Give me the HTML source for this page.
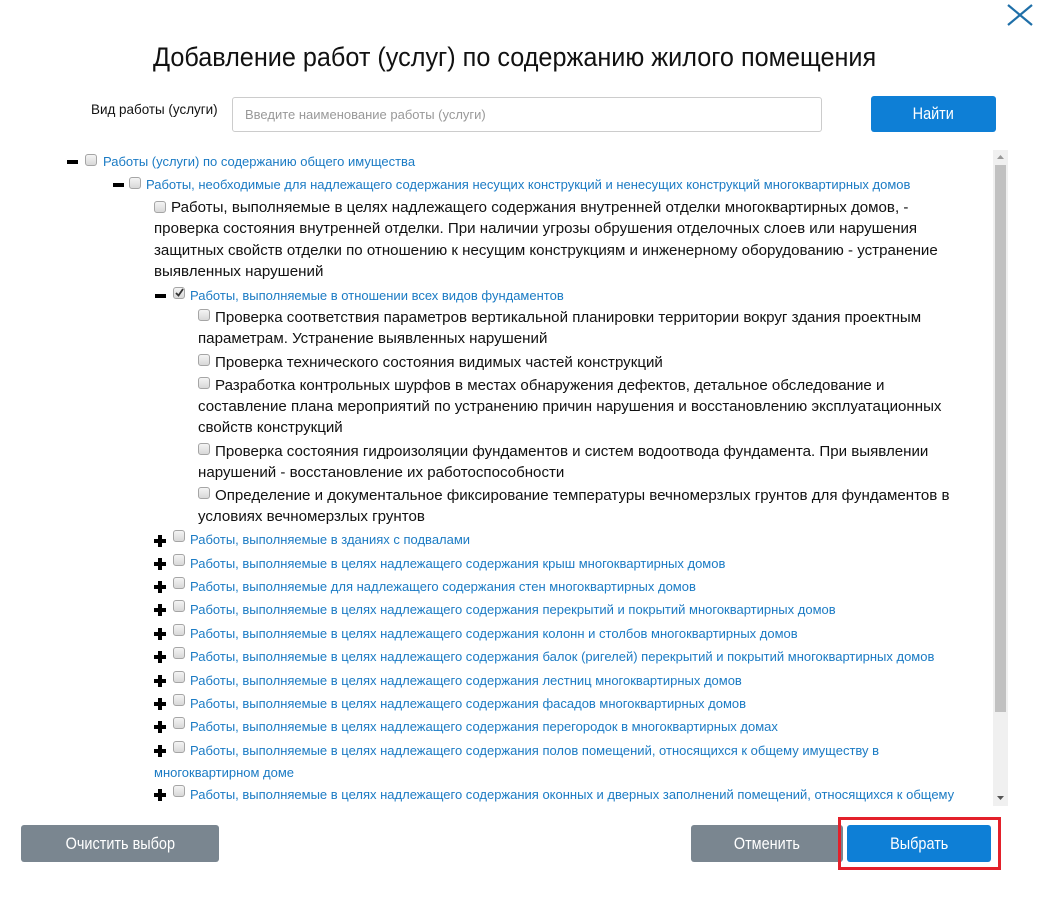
<!DOCTYPE html>
<html><head><meta charset="utf-8"><style>
*{margin:0;padding:0;box-sizing:border-box}
body{width:1041px;height:903px;background:#fff;font-family:"Liberation Sans",sans-serif;position:relative;overflow:hidden}
.a{position:absolute;white-space:nowrap}
.l{font-size:13px;color:#1b7bc4;line-height:14px}
.b{font-size:15.1px;color:#111;line-height:18px}
.cb{position:absolute;width:12px;height:12px;border:1px solid #a5a5a5;border-radius:3px;background:linear-gradient(#f4f4f4,#d8d8d8)}
.mi{position:absolute;width:11px;height:4px;background:#000}
.pl{position:absolute;width:12px;height:12px}
.pl:before{content:"";position:absolute;left:0;top:4px;width:12px;height:4px;background:#000}
.pl:after{content:"";position:absolute;left:4px;top:0;width:4px;height:12px;background:#000}
.btn{position:absolute;color:#fff;font-size:17px;text-align:center;border-radius:3px}
.btn span{display:inline-block;transform:scaleX(0.85)}
</style></head><body>
<svg class="a" style="left:1006px;top:3px" width="28" height="24"><path d="M2 2L26 22M26 2L2 22" stroke="#1f6fa8" stroke-width="2.2"/></svg>
<div class="a" style="left:153px;top:42px;font-size:27px;color:#111;transform:scaleX(0.934);transform-origin:left top;">Добавление работ (услуг) по содержанию жилого помещения</div>
<div class="a" style="left:91px;top:101px;font-size:14px;color:#111;transform:scaleX(0.96);transform-origin:left top">Вид работы (услуги)</div>
<div class="a" style="left:232px;top:97px;width:590px;height:35px;border:1px solid #ccc;border-radius:3px;font-size:13px;color:#999;padding:9px 12px">Введите наименование работы (услуги)</div>
<div class="btn" style="left:871px;top:96px;width:125px;height:36px;background:#0e7fd6;line-height:36px"><span>Найти</span></div>
<div class="a" style="left:993px;top:150px;width:15px;height:656px;background:#f0f0f0"></div>
<div class="a" style="left:995px;top:165px;width:11px;height:547px;background:#c1c1c1"></div>
<svg class="a" style="left:995px;top:152px" width="11" height="10"><path d="M2 7L5.5 3L9 7Z" fill="#999"/></svg>
<svg class="a" style="left:995px;top:793px" width="11" height="10"><path d="M2 3L5.5 7L9 3Z" fill="#555"/></svg>

<div class="mi" style="left:67px;top:160px"></div><div class="cb" style="left:85px;top:154px"></div>
<div class="a l" style="left:103px;top:155px">Работы (услуги) по содержанию общего имущества</div>
<div class="mi" style="left:113px;top:183px"></div><div class="cb" style="left:129px;top:177px"></div>
<div class="a l" style="left:146px;top:178px">Работы, необходимые для надлежащего содержания несущих конструкций и ненесущих конструкций многоквартирных домов</div>
<div class="cb" style="left:154px;top:201px"></div>
<div class="a b" style="left:171px;top:199px">Работы, выполняемые в целях надлежащего содержания внутренней отделки многоквартирных домов, -</div>
<div class="a b" style="left:154px;top:220px">проверка состояния внутренней отделки. При наличии угрозы обрушения отделочных слоев или нарушения</div>
<div class="a b" style="left:154px;top:242px">защитных свойств отделки по отношению к несущим конструкциям и инженерному оборудованию - устранение</div>
<div class="a b" style="left:154px;top:263px">выявленных нарушений</div>
<div class="mi" style="left:155px;top:294px"></div><div class="cb" style="left:173px;top:287px"></div>
<svg class="a" style="left:174px;top:287px" width="11" height="11"><path d="M2 6L4.5 8.5L9 2" stroke="#333" stroke-width="1.8" fill="none"/></svg>
<div class="a l" style="left:190px;top:289px">Работы, выполняемые в отношении всех видов фундаментов</div>
<div class="cb" style="left:198px;top:309px"></div>
<div class="a b" style="left:215px;top:309px">Проверка соответствия параметров вертикальной планировки территории вокруг здания проектным</div>
<div class="a b" style="left:198px;top:330px">параметрам. Устранение выявленных нарушений</div>
<div class="cb" style="left:198px;top:354px"></div>
<div class="a b" style="left:215px;top:354px">Проверка технического состояния видимых частей конструкций</div>
<div class="cb" style="left:198px;top:377px"></div>
<div class="a b" style="left:215px;top:377px">Разработка контрольных шурфов в местах обнаружения дефектов, детальное обследование и</div>
<div class="a b" style="left:198px;top:398px">составление плана мероприятий по устранению причин нарушения и восстановлению эксплуатационных</div>
<div class="a b" style="left:198px;top:419px">свойств конструкций</div>
<div class="cb" style="left:198px;top:443px"></div>
<div class="a b" style="left:215px;top:443px">Проверка состояния гидроизоляции фундаментов и систем водоотвода фундамента. При выявлении</div>
<div class="a b" style="left:198px;top:464px">нарушений - восстановление их работоспособности</div>
<div class="cb" style="left:198px;top:487px"></div>
<div class="a b" style="left:215px;top:487px">Определение и документальное фиксирование температуры вечномерзлых грунтов для фундаментов в</div>
<div class="a b" style="left:198px;top:508px">условиях вечномерзлых грунтов</div>

<div class="pl" style="left:154px;top:535px"></div><div class="cb" style="left:173px;top:530px"></div><div class="a l" style="left:190px;top:533px">Работы, выполняемые в зданиях с подвалами</div>
<div class="pl" style="left:154px;top:558px"></div><div class="cb" style="left:173px;top:554px"></div><div class="a l" style="left:190px;top:557px">Работы, выполняемые в целях надлежащего содержания крыш многоквартирных домов</div>
<div class="pl" style="left:154px;top:581px"></div><div class="cb" style="left:173px;top:577px"></div><div class="a l" style="left:190px;top:580px">Работы, выполняемые для надлежащего содержания стен многоквартирных домов</div>
<div class="pl" style="left:154px;top:604px"></div><div class="cb" style="left:173px;top:600px"></div><div class="a l" style="left:190px;top:603px">Работы, выполняемые в целях надлежащего содержания перекрытий и покрытий многоквартирных домов</div>
<div class="pl" style="left:154px;top:628px"></div><div class="cb" style="left:173px;top:624px"></div><div class="a l" style="left:190px;top:627px">Работы, выполняемые в целях надлежащего содержания колонн и столбов многоквартирных домов</div>
<div class="pl" style="left:154px;top:651px"></div><div class="cb" style="left:173px;top:647px"></div><div class="a l" style="left:190px;top:650px">Работы, выполняемые в целях надлежащего содержания балок (ригелей) перекрытий и покрытий многоквартирных домов</div>
<div class="pl" style="left:154px;top:675px"></div><div class="cb" style="left:173px;top:671px"></div><div class="a l" style="left:190px;top:674px">Работы, выполняемые в целях надлежащего содержания лестниц многоквартирных домов</div>
<div class="pl" style="left:154px;top:698px"></div><div class="cb" style="left:173px;top:694px"></div><div class="a l" style="left:190px;top:697px">Работы, выполняемые в целях надлежащего содержания фасадов многоквартирных домов</div>
<div class="pl" style="left:154px;top:721px"></div><div class="cb" style="left:173px;top:717px"></div><div class="a l" style="left:190px;top:720px">Работы, выполняемые в целях надлежащего содержания перегородок в многоквартирных домах</div>
<div class="pl" style="left:154px;top:745px"></div><div class="cb" style="left:173px;top:741px"></div><div class="a l" style="left:190px;top:744px">Работы, выполняемые в целях надлежащего содержания полов помещений, относящихся к общему имуществу в</div>
<div class="a l" style="left:154px;top:766px">многоквартирном доме</div>
<div class="pl" style="left:154px;top:789px"></div><div class="cb" style="left:173px;top:785px"></div><div class="a l" style="left:190px;top:788px">Работы, выполняемые в целях надлежащего содержания оконных и дверных заполнений помещений, относящихся к общему</div>

<div class="btn" style="left:21px;top:825px;width:198px;height:37px;background:#7a8690;line-height:37px"><span>Очистить выбор</span></div>
<div class="btn" style="left:691px;top:825px;width:152px;height:37px;background:#7a8690;line-height:37px"><span>Отменить</span></div>
<div class="a" style="left:838px;top:817px;width:163px;height:53px;border:3px solid #e3202a"></div>
<div class="btn" style="left:847px;top:825px;width:144px;height:37px;background:#0e7fd6;line-height:37px"><span>Выбрать</span></div>
</body></html>
